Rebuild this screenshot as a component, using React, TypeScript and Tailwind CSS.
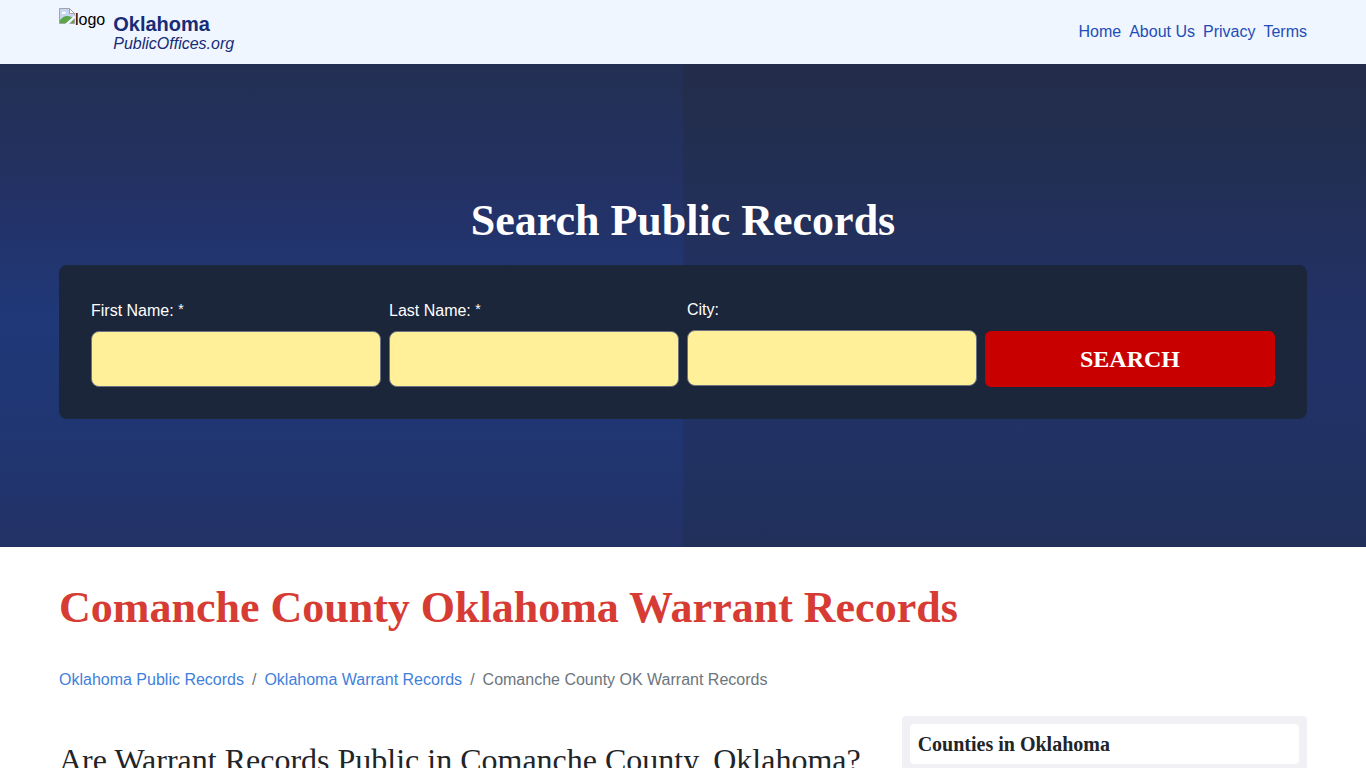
import React from "react";

const links = ["Home", "About Us", "Privacy", "Terms"];

const fields = [
   { id: "firstName", label: "First Name:", required: true },
   { id: "lastName", label: "Last Name:", required: true },
   { id: "city", label: "City:", required: false },
];

const Header = () => {
   return (
      <header className="bg-[#eff6ff]">
         <div className="max-w-7xl mx-auto h-16 px-4 flex items-center justify-between">
            <a href="#" className="flex items-start gap-2">
               {/* Logo */}
               <span className="flex h-12 text-black">
                  <svg width="16" height="16" viewBox="0 0 16 16" aria-hidden="true">
                     <path d="M.5.5h10l5 5v10H.5z" fill="#c6d5f2" stroke="#a3a3a8" />
                     <path d="M3 6c-1-2 1-3 2-2 2-1 3 2 1 2z" fill="#fff" />
                     <path d="M1 15v-3c2-2 4-4 7-4 3 0 5 1 7 3v4z" fill="#5aa648" />
                     <path d="M10.500.5v5h5z" fill="#fff" stroke="#a3a3a8" />
                     <path d="M6 16 16 7v3l-6 6z" fill="#eff6ff" />
                  </svg>
                  <span>logo</span>
               </span>
               <span className="flex flex-col pt-1 text-[#172b77]">
                  <span className="text-xl leading-6 font-bold">Oklahoma</span>
                  <span className="leading-4 italic">PublicOffices.org</span>
               </span>
            </a>
            <nav className="flex gap-2">
               {links.map((link) => (
                  <a key={link} href="#" className="text-[#1e4db7] hover:underline">
                     {link}
                  </a>
               ))}
            </nav>
         </div>
      </header>
   );
};

const Search = () => {
   return (
      <section className="bg-[linear-gradient(180deg,#232f52,#233267_30%,#203878_52%,#203673_75%,#233266)] py-32 relative isolate">
         {/* Darker right half */}
         <div className="absolute inset-y-0 right-0 w-1/2 -z-10 bg-[linear-gradient(180deg,#232c49,#222f54_22%,#223162_45%,#223268_65%,#20305a)]" />
         <div className="max-w-7xl mx-auto px-4">
            <h2 className="text-center text-white font-bold font-['Liberation_Serif',serif] text-[44px] leading-[57px] mb-4">
               Search Public Records
            </h2>
            <form
               className="grid grid-cols-1 md:grid-cols-4 items-start gap-2 rounded-lg bg-[#1c263b] p-8"
               onSubmit={(e) => e.preventDefault()}
            >
               {fields.map((field) => (
                  <div key={field.id} className="flex flex-col gap-2">
                     <label htmlFor={field.id} className="text-white leading-[25px]">
                        {field.label} {field.required && <span className="text-sm leading-[25px] align-[2px]">*</span>}
                     </label>
                     <input
                        id={field.id}
                        type="text"
                        required={field.required}
                        className="h-14 w-full rounded-lg border border-gray-500 bg-[#fff099] px-3"
                     />
                  </div>
               ))}
               <button
                  type="submit"
                  className="h-14 self-end rounded-md bg-[#c80000] text-white text-2xl font-bold font-['Liberation_Serif',serif]"
               >
                  SEARCH
               </button>
            </form>
         </div>
      </section>
   );
};

const App = () => {
   return (
      <div className="min-h-screen bg-white font-['Liberation_Sans',Arial,sans-serif] text-base">
         <Header />
         <Search />
         <main className="max-w-7xl mx-auto px-4 pt-8">
            <h1 className="text-[#d63b34] font-bold font-['Liberation_Serif',serif] text-[44px] leading-[57px]">
               Comanche County Oklahoma Warrant Records
            </h1>
            <nav aria-label="Breadcrumb" className="mt-8 flex gap-2 leading-6 text-[#6c757d]">
               <a href="#" className="text-[#3f7fdc]">Oklahoma Public Records</a>
               <span>/</span>
               <a href="#" className="text-[#3f7fdc]">Oklahoma Warrant Records</a>
               <span>/</span>
               <span>Comanche County OK Warrant Records</span>
            </nav>
            <div className="mt-6 grid grid-cols-1 lg:grid-cols-3 gap-4">
               <article className="lg:col-span-2 pt-6">
                  <h2 className="text-[#212529] font-['Liberation_Serif',serif] text-[32px] leading-10">
                     Are Warrant Records Public in Comanche County, Oklahoma?
                  </h2>
               </article>
               <aside className="rounded-sm bg-[#f0f0f5] p-2">
                  <h3 className="rounded-sm bg-white p-2 text-[#212529] font-bold font-['Liberation_Serif',serif] text-xl leading-6">
                     Counties in Oklahoma
                  </h3>
               </aside>
            </div>
         </main>
      </div>
   );
};

export default App;
